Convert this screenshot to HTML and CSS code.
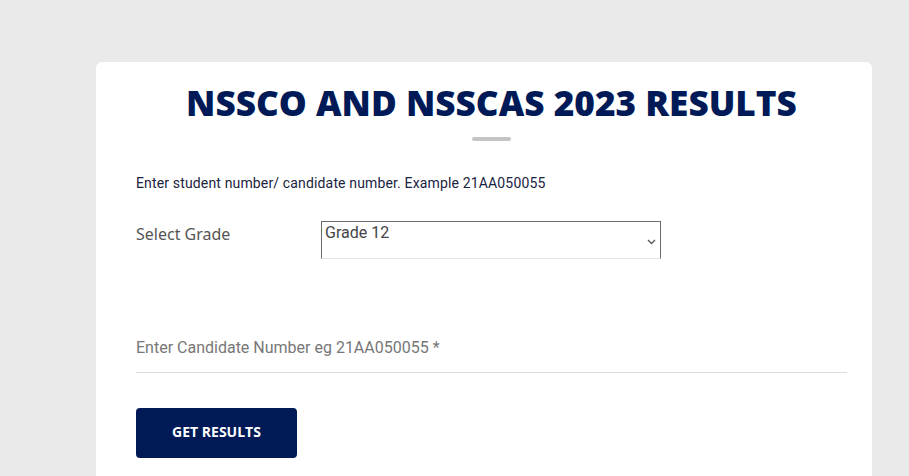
FILE: index.html
```html
<!DOCTYPE html>
<html lang="en">
<head>
    <meta charset="UTF-8">
    <meta name="viewport" content="width=device-width, initial-scale=1.0">
    <title>NSSCO and NSSCAS 2023 Results</title>
    <link rel="stylesheet" href="styles.css">
</head>
<body>
    <div class="container">
        <h1>NSSCO AND NSSCAS 2023 RESULTS</h1>
        <div class="divider"></div>

        <p class="hint">Enter student number/ candidate number. Example 21AA050055</p>

        <div class="form-row">
            <label for="grade">Select Grade</label>
            <div class="select-wrap">
                <select id="grade">
                    <option>Grade 12</option>
                    <option>Grade 11</option>
                </select>
                <svg class="chevron" width="9" height="6" viewBox="0 0 9 6"><path d="M1 1l3.5 3.5L8 1" fill="none" stroke="#555" stroke-width="1.3"/></svg>
            </div>
        </div>

        <div class="form-group">
            <input type="text" id="candidate" placeholder="Enter Candidate Number eg 21AA050055 *">
        </div>

        <button>GET RESULTS</button>
    </div>
</body>
</html>
```

FILE: styles.css
```css
body {
    margin: 0;
    padding: 62px 37px 0 96px;
    background-color: #eaeaea;
    font-family: Roboto, 'Liberation Sans', sans-serif;
    height: 476px;
    box-sizing: border-box;
    overflow: hidden;
}
.container {
    background: white;
    border-radius: 6px 6px 0 0;
    padding: 20px 25px 0 40px;
    height: 100%;
    box-sizing: border-box;
}
h1 {
    font-family: 'Open Sans', sans-serif;
    font-weight: 800;
    font-size: 35.2px;
    color: #001a57;
    text-align: center;
    margin: 0;
    line-height: 40px;
}
.divider {
    width: 39px;
    height: 4px;
    background: #c4c4c4;
    border-radius: 2px;
    margin: 15px auto 0;
}
.hint {
    font-size: 14px;
    letter-spacing: 0.15px;
    color: #1a2340;
    margin: 34px 0 0;
}
.form-row {
    display: flex;
    align-items: flex-start;
    margin-top: 30px;
}
.form-row label {
    width: 185px;
    font-family: 'Noto Sans', sans-serif;
    font-size: 16px;
    color: #555;
    padding-top: 2px;
}
.select-wrap {
    position: relative;
    width: 340px;
}
select {
    appearance: none;
    width: 100%;
    height: 38px;
    border: 1px solid #6b6b6b;
    border-bottom-color: #e4e4e4;
    border-radius: 0;
    background: white;
    font-family: Roboto, sans-serif;
    font-size: 16px;
    color: #444;
    padding: 0 3px 15px;
    box-sizing: border-box;
    outline: none;
}
.chevron {
    position: absolute;
    right: 5px;
    top: 18px;
}
.form-group {
    margin-top: 73px;
}
input[type="text"] {
    width: 100%;
    border: none;
    border-bottom: 1px solid #dcdcdc;
    padding: 6px 0 15px;
    font-family: Roboto, sans-serif;
    font-size: 16px;
    outline: none;
    box-sizing: border-box;
}
input::placeholder {
    color: #777;
}
button {
    margin-top: 35px;
    width: 161px;
    height: 50px;
    padding: 0 0 3px;
    background-color: #001a57;
    color: white;
    border: none;
    border-radius: 4px;
    font-family: 'Open Sans', sans-serif;
    font-weight: 700;
    font-size: 14px;
    cursor: pointer;
}
```
